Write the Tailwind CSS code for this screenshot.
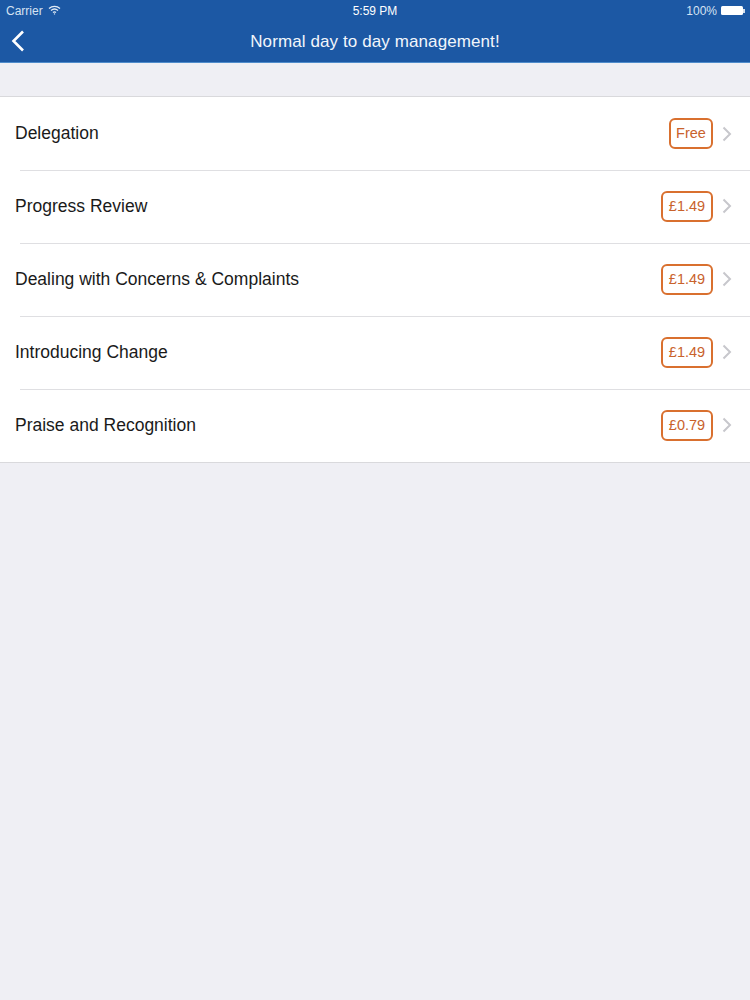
<!DOCTYPE html>
<html lang="en">
<head>
  <meta charset="UTF-8">
  <title>Normal day to day management!</title>
  <script src="https://cdn.jsdelivr.net/npm/@tailwindcss/browser@4"></script>
</head>
<body class="h-[1000px] overflow-hidden bg-[#efeff4] font-['Liberation_Sans',sans-serif] text-[#1a1a1a]">
  <!-- status bar + nav -->
  <header class="h-[63px] bg-[#1c58a4] border-b border-[#4f8ccb] text-white">
    <div class="relative flex h-[21px] items-center justify-between pl-[6px] pr-[5px] text-[12px] text-[#d5e2f2]">
      <div class="flex items-center gap-[5px]">
        <span>Carrier</span>
        <svg width="13" height="10" viewBox="0 0 13 10" fill="none" stroke="#e4edf7" stroke-width="1.3" class="-mt-[2px]">
          <path d="M1 3.4C4.2.6 8.8.6 12 3.4"/>
          <path d="M3 5.5c2-1.7 5-1.700 7 0"/>
          <path d="M5 7.400c.9-.7 2.100-.7 3 0"/>
          <circle cx="6.500" cy="8.900" r=".7" fill="#e4edf7" stroke="none"/>
        </svg>
      </div>
      <span class="absolute left-1/2 -translate-x-1/2 text-white">5:59 PM</span>
      <div class="flex items-center gap-[4px]">
        <span>100%</span>
        <div class="h-[9px] w-[22px] rounded-[1.5px] bg-white"></div>
        <div class="-ml-[4px] h-[4px] w-[2px] bg-white/80"></div>
      </div>
    </div>
    <div class="relative flex h-[41px] items-center justify-center">
      <svg width="14" height="22" viewBox="0 0 14 22" fill="none" stroke="white" stroke-width="2.6" class="absolute left-[11px] top-[9px]">
        <path d="M12 1.500 2.500 11 12 20.500"/>
      </svg>
      <h1 class="text-[17px] tracking-[0.1px] text-[#f2f6fb]">Normal day to day management!</h1>
    </div>
  </header>

  <!-- list -->
  <ul class="mt-[33px] border-y border-[#d9d9dc] bg-white text-[17.5px]">
    <li class="flex h-[73px] items-center justify-between pl-[15px] pr-[18px]">
      <span>Delegation</span>
      <div class="flex items-center gap-[9px]">
        <span class="flex h-[31px] w-[44px] items-center justify-center rounded-[6px] border-2 border-[#d9702f] pt-[1px] text-[14.5px] text-[#c9622c]">Free</span>
        <svg width="10" height="16" viewBox="0 0 10 16" fill="none" stroke="#c7c7cc" stroke-width="2"><path d="M1.500 1.500 8 8l-6.500 6.500"/></svg>
      </div>
    </li>
    <li class="ml-[20px] h-px bg-[#dfdfe2]"></li>
    <li class="flex h-[72px] items-center justify-between pb-[2px] pl-[15px] pr-[18px]">
      <span>Progress Review</span>
      <div class="flex items-center gap-[9px]">
        <span class="flex h-[31px] w-[52px] items-center justify-center rounded-[6px] border-2 border-[#d9702f] pt-[1px] text-[14.5px] text-[#c9622c]">£1.49</span>
        <svg width="10" height="16" viewBox="0 0 10 16" fill="none" stroke="#c7c7cc" stroke-width="2"><path d="M1.500 1.500 8 8l-6.500 6.500"/></svg>
      </div>
    </li>
    <li class="ml-[20px] h-px bg-[#dfdfe2]"></li>
    <li class="flex h-[72px] items-center justify-between pb-[2px] pl-[15px] pr-[18px]">
      <span>Dealing with Concerns &amp; Complaints</span>
      <div class="flex items-center gap-[9px]">
        <span class="flex h-[31px] w-[52px] items-center justify-center rounded-[6px] border-2 border-[#d9702f] pt-[1px] text-[14.5px] text-[#c9622c]">£1.49</span>
        <svg width="10" height="16" viewBox="0 0 10 16" fill="none" stroke="#c7c7cc" stroke-width="2"><path d="M1.500 1.500 8 8l-6.500 6.500"/></svg>
      </div>
    </li>
    <li class="ml-[20px] h-px bg-[#dfdfe2]"></li>
    <li class="flex h-[72px] items-center justify-between pb-[2px] pl-[15px] pr-[18px]">
      <span>Introducing Change</span>
      <div class="flex items-center gap-[9px]">
        <span class="flex h-[31px] w-[52px] items-center justify-center rounded-[6px] border-2 border-[#d9702f] pt-[1px] text-[14.5px] text-[#c9622c]">£1.49</span>
        <svg width="10" height="16" viewBox="0 0 10 16" fill="none" stroke="#c7c7cc" stroke-width="2"><path d="M1.500 1.500 8 8l-6.500 6.500"/></svg>
      </div>
    </li>
    <li class="ml-[20px] h-px bg-[#dfdfe2]"></li>
    <li class="flex h-[72px] items-center justify-between pb-[2px] pl-[15px] pr-[18px]">
      <span>Praise and Recognition</span>
      <div class="flex items-center gap-[9px]">
        <span class="flex h-[31px] w-[52px] items-center justify-center rounded-[6px] border-2 border-[#d9702f] pt-[1px] text-[14.5px] text-[#c9622c]">£0.79</span>
        <svg width="10" height="16" viewBox="0 0 10 16" fill="none" stroke="#c7c7cc" stroke-width="2"><path d="M1.500 1.500 8 8l-6.500 6.500"/></svg>
      </div>
    </li>
  </ul>
</body>
</html>
